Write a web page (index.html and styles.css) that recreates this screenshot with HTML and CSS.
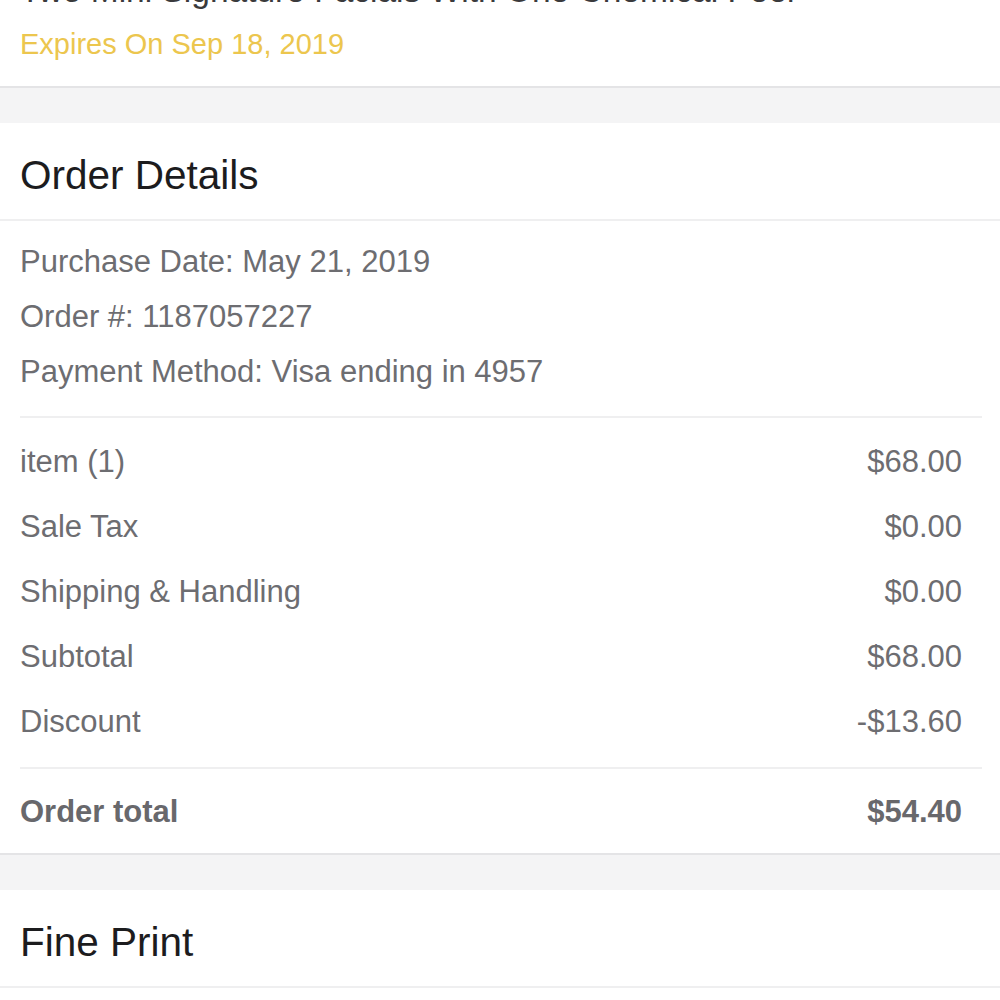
FILE: index.html
```html
<!DOCTYPE html>
<html lang="en">
<head>
<meta charset="utf-8">
<title>Order Details</title>
<link rel="stylesheet" href="styles.css">
</head>
<body>
<div class="card deal">
  <div class="deal-title">Two Mini Signature Facials With One Chemical Peel</div>
  <div class="deal-expires">Expires On Sep 18, 2019</div>
</div>

<section class="card section">
  <h2 class="section-title">Order Details</h2>
  <div class="section-body">
    <div class="info">
      <div class="info-line">Purchase Date: May 21, 2019</div>
      <div class="info-line">Order #: 1187057227</div>
      <div class="info-line">Payment Method: Visa ending in 4957</div>
    </div>
    <div class="lines">
      <div class="row"><span>item (1)</span><span>$68.00</span></div>
      <div class="row"><span>Sale Tax</span><span>$0.00</span></div>
      <div class="row"><span>Shipping &amp; Handling</span><span>$0.00</span></div>
      <div class="row"><span>Subtotal</span><span>$68.00</span></div>
      <div class="row"><span>Discount</span><span>-$13.60</span></div>
    </div>
    <div class="total">
      <div class="row row-total"><span>Order total</span><span>$54.40</span></div>
    </div>
  </div>
</section>

<section class="card section">
  <h2 class="section-title">Fine Print</h2>
  <div class="fine-body"></div>
</section>
</body>
</html>
```

FILE: styles.css
```css
html, body {
  margin: 0;
  padding: 0;
}

body {
  background: #f4f4f5;
  font-family: "Liberation Sans", Arial, Helvetica, sans-serif;
  overflow: hidden;
}

.card {
  background: #ffffff;
  border-bottom: 2px solid #e4e4e6;
}

.deal {
  margin-top: -29px;
  padding: 0 20px 22px 20px;
}

.deal-title {
  font-size: 33.5px;
  line-height: 40px;
  color: #3a3a3c;
  white-space: nowrap;
}

.deal-expires {
  margin-top: 13px;
  font-size: 29px;
  line-height: 40px;
  color: #ecc64e;
}

.section {
  margin-top: 35px;
}

.section-title {
  margin: 0;
  padding: 8px 20px 0 20px;
  font-size: 40.5px;
  line-height: 88px;
  font-weight: normal;
  color: #1c1c1e;
  border-bottom: 2px solid #efeff0;
}

.section-body {
  margin: 0 18px 0 20px;
}

.info {
  padding: 13px 0 17px 0;
  border-bottom: 2px solid #efeff0;
}

.info-line {
  font-size: 31px;
  line-height: 55px;
  color: #6d6d71;
}

.lines {
  padding: 11px 0 13px 0;
  border-bottom: 2px solid #efeff0;
}

.total {
  padding: 10px 0 9px 0;
}

.row {
  display: flex;
  justify-content: space-between;
  padding-right: 20px;
  font-size: 31px;
  line-height: 65px;
  color: #6d6d71;
}

.row-total {
  font-weight: bold;
  color: #68686c;
}

.fine-body {
  height: 120px;
}
```
